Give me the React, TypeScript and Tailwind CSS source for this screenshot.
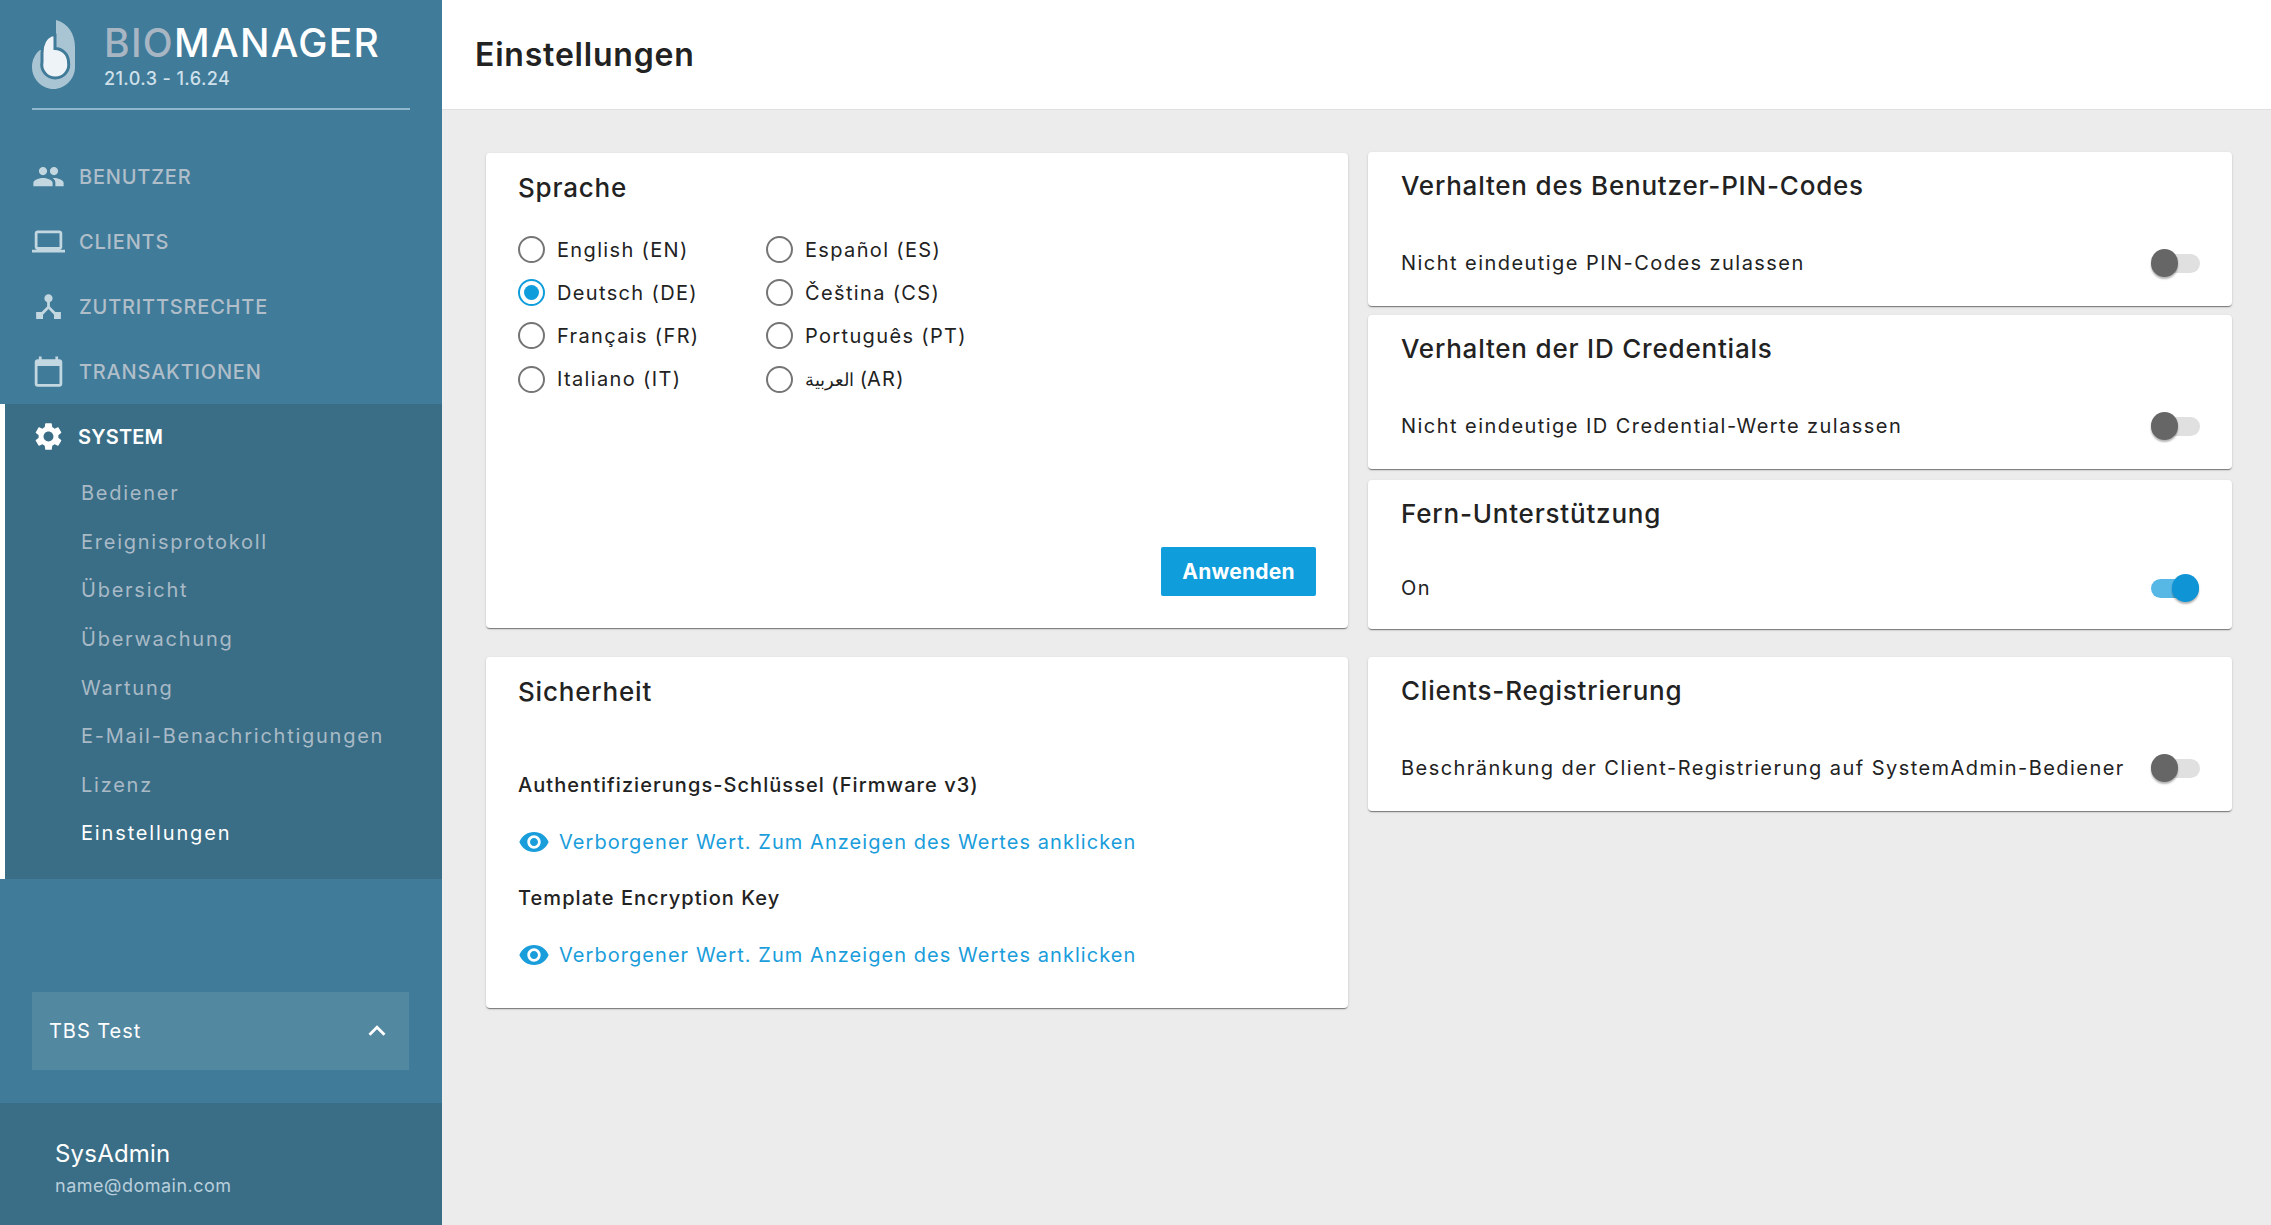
import React from "react";

const P = {
  people: "M16 11c1.66 0 2.99-1.34 2.99-3S17.66 5 16 5c-1.66 0-3 1.34-3 3s1.34 3 3 3zm-8 0c1.66 0 2.99-1.34 2.99-3S9.66 5 8 5C6.34 5 5 6.34 5 8s1.34 3 3 3zm0 2c-2.33 0-7 1.17-7 3.5V19h14v-2.5c0-2.33-4.67-3.5-7-3.5zm8 0c-.29 0-.62.02-.97.05 1.16.84 1.97 1.97 1.97 3.45V19h6v-2.5c0-2.33-4.67-3.5-7-3.5z",
  laptop: "M20 18c1.1 0 1.99-.9 1.99-2L22 6c0-1.1-.9-2-2-2H4c-1.1 0-2 .9-2 2v10c0 1.1.9 2 2 2H0v2h24v-2h-4zM4 6h16v10H4V6z",
  hub: "M17 16l-4-4V8.82C14.16 8.4 15 7.3 15 6c0-1.66-1.34-3-3-3S9 4.34 9 6c0 1.3.84 2.4 2 2.82V12l-4 4H3v5h5v-3.05l4-4.2 4 4.2V21h5v-5h-4z",
  cal: "M20 3h-1V1h-2v2H7V1H5v2H4c-1.1 0-2 .9-2 2v16c0 1.1.9 2 2 2h16c1.1 0 2-.9 2-2V5c0-1.1-.9-2-2-2zm0 18H4V8h16v13z",
  gear: "M19.14 12.94c.04-.3.06-.61.06-.94 0-.32-.02-.64-.07-.94l2.03-1.58c.18-.14.23-.41.12-.61l-1.92-3.32c-.12-.22-.37-.29-.59-.22l-2.39.96c-.5-.38-1.03-.7-1.62-.94l-.36-2.54c-.04-.24-.24-.41-.48-.41h-3.84c-.24 0-.43.17-.47.41l-.36 2.54c-.59.24-1.13.57-1.62.94l-2.39-.96c-.22-.08-.47 0-.59.22L2.74 8.87c-.12.21-.08.47.12.61l2.03 1.58c-.05.3-.09.63-.09.94s.02.64.07.94l-2.03 1.58c-.18.14-.23.41-.12.61l1.92 3.32c.12.22.37.29.59.22l2.39-.96c.5.38 1.03.7 1.62.94l.36 2.54c.05.24.24.41.48.41h3.84c.24 0 .44-.17.47-.41l.36-2.54c.59-.24 1.13-.56 1.62-.94l2.39.96c.22.08.47 0 .59-.22l1.92-3.32c.12-.22.07-.47-.12-.61l-2.01-1.58zM12 15.6c-1.98 0-3.6-1.62-3.6-3.6s1.62-3.6 3.6-3.6 3.6 1.62 3.6 3.6-1.62 3.6-3.6 3.6z",
  less: "M12 8l-6 6 1.41 1.41L12 10.83l4.59 4.58L18 14z",
  eye: "M12 4.5C7 4.5 2.73 7.61 1 12c1.73 4.39 6 7.5 11 7.5s9.27-3.11 11-7.5c-1.73-4.39-6-7.5-11-7.5zM12 17c-2.76 0-5-2.24-5-5s2.24-5 5-5 5 2.24 5 5-2.24 5-5 5zm0-8c-1.66 0-3 1.34-3 3s1.34 3 3 3 3-1.34 3-3-1.34-3-3-3z",
};

function Icon({ d, className }: { d: string; className: string }) {
  return (
    <svg viewBox="0 0 24 24" className={className} fill="currentColor">
      <path d={d} />
    </svg>
  );
}

function Logo() {
  return (
    <svg viewBox="0 0 43 69" className="w-[43px] h-[69px] shrink-0">
      <path d="M24 0C36 3 43 14 43 27V47C43 59 33 69 21.5 69S0 59 0 47C0 40 3 34 8 30L24 30Z" fill="#a9c5d3" />
      <path d="M19.5 15C13 18 10 25 10 33V42A13.5 13.5 0 1 0 36.5 42A13.5 13.5 0 0 0 23 28.5V15Z" fill="#eef3f7" stroke="#407b99" strokeWidth="3" />
    </svg>
  );
}

function NavItem({ d, label, iconClass }: { d: string; label: string; iconClass: string }) {
  return (
    <div className="h-[65px] flex items-center pl-[32px]">
      <div className="w-[47px] shrink-0 flex">
        <Icon d={d} className={iconClass} />
      </div>
      <span className="text-[20px] tracking-[0.8px] font-medium text-[#b0bec9]">{label}</span>
    </div>
  );
}

function Radio({ label, checked }: { label: React.ReactNode; checked?: boolean }) {
  return (
    <div className="h-[43.2px] flex items-center">
      <span
        className={
          checked
            ? "w-[27px] h-[27px] rounded-full border-2 border-[#0f9ddb] flex items-center justify-center shrink-0"
            : "w-[27px] h-[27px] rounded-full border-2 border-[#757575] flex items-center justify-center shrink-0"
        }
      >
        {checked ? <span className="w-[15px] h-[15px] rounded-full bg-[#0f9ddb]" /> : null}
      </span>
      <span className="ml-[12px] text-[20px] tracking-[1.35px] text-[#222222] whitespace-nowrap">{label}</span>
    </div>
  );
}

function Toggle({ on }: { on?: boolean }) {
  return (
    <div className="relative w-[49px] h-[28px] shrink-0 flex items-center">
      <div className={on ? "w-[48px] h-[19px] rounded-full bg-[#57b8e6]" : "w-[46px] h-[19px] ml-[3px] rounded-full bg-[#e0e0e0]"} />
      <div
        className={
          on
            ? "absolute right-[1px] top-0 w-[27px] h-[28px] rounded-full bg-[#0f94d6] shadow-[0_2px_2px_rgba(0,0,0,0.3)]"
            : "absolute left-0 top-0 w-[27px] h-[28px] rounded-full bg-[#666666] shadow-[0_2px_2px_rgba(0,0,0,0.3)]"
        }
      />
    </div>
  );
}

const cardCls =
  "bg-white rounded-[4px] shadow-[0_2px_1px_-1px_rgba(0,0,0,0.3),0_1px_1px_0_rgba(0,0,0,0.2),0_1px_3px_0_rgba(0,0,0,0.12)]";

function ToggleCard({ title, text, on, h, mt, rowMt }: { title: string; text: string; on?: boolean; h: string; mt: string; rowMt: string }) {
  return (
    <div className={`${cardCls} ${h} ${mt} pt-[18px] pl-[33px] pr-[32px]`}>
      <h2 className="text-[26px] leading-[32px] font-medium tracking-[0.8px] text-[#222222]">{title}</h2>
      <div className={`${rowMt} flex items-center justify-between`}>
        <span className="text-[20px] tracking-[1.45px] text-[#222222] whitespace-nowrap">{text}</span>
        <Toggle on={on} />
      </div>
    </div>
  );
}

function LinkRow() {
  return (
    <div className="flex items-center text-[#1a9ddb]">
      <Icon d={P.eye} className="w-[32px] h-[32px]" />
      <span className="ml-[9px] text-[20px] tracking-[1.05px] whitespace-nowrap">Verborgener Wert. Zum Anzeigen des Wertes anklicken</span>
    </div>
  );
}

const subs = ["Bediener", "Ereignisprotokoll", "Übersicht", "Überwachung", "Wartung", "E-Mail-Benachrichtigungen", "Lizenz"];

export default function App() {
  return (
    <div className="flex h-[1225px] w-full overflow-hidden bg-[#ececec] font-['Inter',sans-serif]">
      <aside className="w-[442px] shrink-0 bg-[#407b99] flex flex-col">
        <div className="h-[110px] mx-[32px] border-b-2 border-[#8fb8cc] flex items-start pt-[20px]">
          <Logo />
          <div className="ml-[29px]">
            <div className="text-[39px] leading-[46px] font-medium tracking-[1.3px] whitespace-nowrap">
              <span className="text-[#a8b6c4]">BIO</span>
              <span className="text-white">MANAGER</span>
            </div>
            <div className="mt-[1px] text-[18px] leading-[24px] font-medium tracking-[0.4px] text-[#cfe0ea] whitespace-nowrap">21.0.3 - 1.6.24</div>
          </div>
        </div>
        <nav className="mt-[34px]">
          <NavItem d={P.people} label="BENUTZER" iconClass="w-[33px] h-[33px] text-[#c3d7e1]" />
          <NavItem d={P.laptop} label="CLIENTS" iconClass="w-[33px] h-[33px] text-[#c3d7e1]" />
          <NavItem d={P.hub} label="ZUTRITTSRECHTE" iconClass="w-[33px] h-[33px] text-[#c3d7e1]" />
          <NavItem d={P.cal} label="TRANSAKTIONEN" iconClass="w-[33px] h-[33px] text-[#c3d7e1]" />
          <div className="bg-[#3a6e87] border-l-[5px] border-white pb-[21px]">
            <div className="h-[65px] flex items-center pl-[27px]">
              <div className="w-[46px] shrink-0 flex">
                <Icon d={P.gear} className="w-[33px] h-[33px] text-white" />
              </div>
              <span className="text-[20px] tracking-[0.2px] font-semibold text-white">SYSTEM</span>
            </div>
            {subs.map((s) => (
              <div key={s} className="h-[48.6px] flex items-center pl-[76px] text-[20px] tracking-[1.75px] text-[#a9bac6]">
                {s}
              </div>
            ))}
            <div className="h-[48.6px] flex items-center pl-[76px] text-[20px] tracking-[1.85px] text-white">Einstellungen</div>
          </div>
        </nav>
        <div className="mt-auto ml-[32px] mr-[33px] mb-[33px] h-[78px] bg-[#5388a1] flex items-center justify-between pl-[17px] pr-[15px]">
          <span className="text-[20px] tracking-[0.95px] text-white">TBS Test</span>
          <Icon d={P.less} className="w-[34px] h-[34px] text-white" />
        </div>
        <div className="h-[122px] bg-[#3a6e87] pl-[55px] pt-[33px]">
          <div className="text-[24px] leading-[36px] tracking-[0.2px] text-white">SysAdmin</div>
          <div className="text-[18px] leading-[26px] tracking-[0.5px] text-[#b9cfdb] mt-[1px]">name@domain.com</div>
        </div>
      </aside>
      <main className="flex-1 min-w-0 flex flex-col">
        <header className="h-[110px] shrink-0 bg-white border-b border-[#e0e0e0] flex items-center pl-[33px]">
          <h1 className="text-[32px] tracking-[0.8px] font-semibold text-[#222222]">Einstellungen</h1>
        </header>
        <div className="flex-1 pt-[43px] pl-[44px] flex items-start gap-[20px]">
          <div className="w-[862px] shrink-0">
            <section className={`${cardCls} h-[475px] pt-[19px] px-[32px] relative`}>
              <h2 className="text-[26px] leading-[32px] font-medium tracking-[0.8px] text-[#222222]">Sprache</h2>
              <div className="mt-[24px] flex">
                <div className="w-[248px]">
                  <Radio label="English (EN)" />
                  <Radio label="Deutsch (DE)" checked />
                  <Radio label="Français (FR)" />
                  <Radio label="Italiano (IT)" />
                </div>
                <div>
                  <Radio label="Español (ES)" />
                  <Radio label="Čeština (CS)" />
                  <Radio label="Português (PT)" />
                  <Radio label={<><span className="text-[18px] tracking-normal">العربية</span> (AR)</>} />
                </div>
              </div>
              <button className="absolute right-[32px] bottom-[32px] w-[155px] h-[49px] rounded-[2px] bg-[#0f9ddb] text-white text-[21px] tracking-[0.2px] font-bold">
                Anwenden
              </button>
            </section>
            <section className={`${cardCls} h-[351px] mt-[29px] pt-[19px] px-[32px]`}>
              <h2 className="text-[26px] leading-[32px] font-medium tracking-[0.8px] text-[#222222]">Sicherheit</h2>
              <div className="mt-[63px] text-[20px] leading-[28px] font-medium tracking-[1.05px] text-[#222222]">Authentifizierungs-Schlüssel (Firmware v3)</div>
              <div className="mt-[27px]"><LinkRow /></div>
              <div className="mt-[26px] text-[20px] leading-[28px] font-medium tracking-[1.05px] text-[#222222]">Template Encryption Key</div>
              <div className="mt-[27px]"><LinkRow /></div>
            </section>
          </div>
          <div className="w-[864px] shrink-0 -mt-[1px]">
            <ToggleCard title="Verhalten des Benutzer-PIN-Codes" text="Nicht eindeutige PIN-Codes zulassen" h="h-[154px]" mt="mt-0" rowMt="mt-[46px]" />
            <ToggleCard title="Verhalten der ID Credentials" text="Nicht eindeutige ID Credential-Werte zulassen" h="h-[154px]" mt="mt-[9px]" rowMt="mt-[46px]" />
            <ToggleCard title="Fern-Unterstützung" text="On" on h="h-[149px]" mt="mt-[11px]" rowMt="mt-[43px]" />
            <ToggleCard title="Clients-Registrierung" text="Beschränkung der Client-Registrierung auf SystemAdmin-Bediener" h="h-[154px]" mt="mt-[28px]" rowMt="mt-[46px]" />
          </div>
        </div>
      </main>
    </div>
  );
}
